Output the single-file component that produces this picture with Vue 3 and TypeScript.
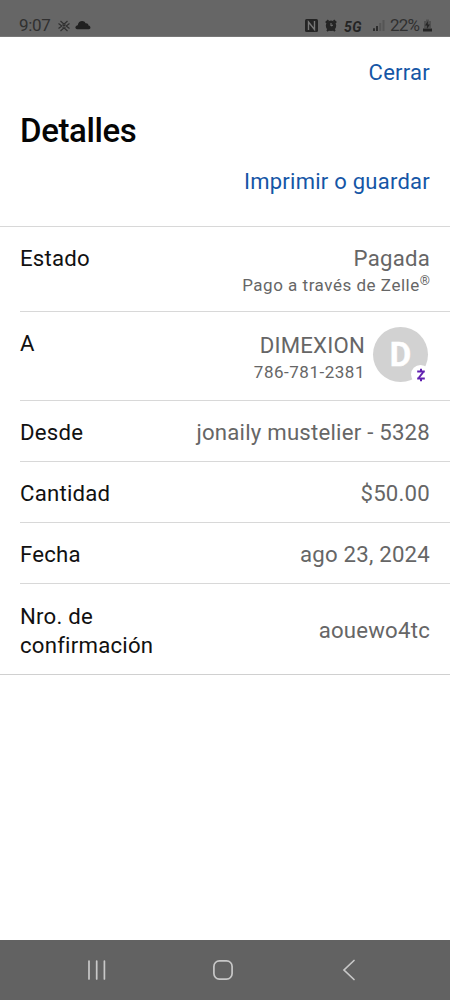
<script setup lang="ts">
interface Row {
  key: string
  label: string
  value: string
  sub?: string
  mark?: string
  contact?: boolean
}

const rows: Row[] = [
  { key: 'status', label: 'Estado', value: 'Pagada', sub: 'Pago a través de Zelle', mark: '®' },
  { key: 'to', label: 'A', value: 'DIMEXION', sub: '786-781-2381', contact: true },
  { key: 'from', label: 'Desde', value: 'jonaily mustelier - 5328' },
  { key: 'amount', label: 'Cantidad', value: '$50.00' },
  { key: 'date', label: 'Fecha', value: 'ago 23, 2024' },
  { key: 'confirmation', label: 'Nro. de confirmación', value: 'aouewo4tc' },
]
</script>

<template>
  <div class="screen">
    <header class="status-bar">
      <span class="clock">9:07</span>
      <svg class="fan" viewBox="0 0 12 12" width="12" height="12">
        <path d="M.5 3.500 3.800 6 .5 8.500M11.500 3.500 8.200 6l3.300 2.500M2.500 1 6 4.300 9.500 1M2.500 11 6 7.700 9.500 11" />
        <path d="M4.500 4.500l3 3M7.500 4.500l-3 3" />
      </svg>
      <svg class="cloud" viewBox="0 0 16 10" width="16" height="10">
        <path d="M2.200 9.200C-.6 9.200 0 5.500 2.800 5.200 3 .2 9.500-.4 10.500 3.200 13 3 13.400 4.500 13.500 5.400 16.300 6 15.800 9.200 13.800 9.200Z" />
      </svg>
      <div class="indicators">
        <svg class="nfc" viewBox="0 0 13 13" width="13" height="13">
          <rect width="13" height="13" rx="1.500" />
          <path d="M3.500 11V3L9.500 10.500V2" />
        </svg>
        <svg class="alarm" viewBox="0 0 12 13" width="12" height="13">
          <path class="ears" d="M.8 3.800 3.500 1.300M11.200 3.800 8.500 1.300M2 12l1.700-1.700M10 12l-1.700-1.700" />
          <circle cx="6" cy="6.800" r="5.200" />
          <path class="hands" d="M6 4v3l2-1" />
        </svg>
        <span class="network">5G</span>
        <svg class="signal" viewBox="0 0 12 12" width="12" height="12">
          <path class="on" d="M1 12V9.200M4 12V7" />
          <path class="off" d="M7.200 12V4M10.500 12V1" />
        </svg>
        <span class="percent">22%</span>
        <svg class="battery" viewBox="0 0 9 13" width="9" height="13">
          <path class="shell" d="M3 .5h3V2h2v7H1V2h2Z" />
          <path class="charge" d="M5 2 2 6.500h2.200L3.700 10 7 5.500H4.700ZM0 9.500h9v3H0Z" />
        </svg>
      </div>
    </header>

    <main class="sheet">
      <div class="action close"><a>Cerrar</a></div>
      <h1>Detalles</h1>
      <div class="action print"><a>Imprimir o guardar</a></div>

      <dl class="details">
        <div v-for="row in rows" :key="row.key" class="row" :class="row.key">
          <dt>{{ row.label }}</dt>
          <dd>
            <div class="text">
              <span class="value">{{ row.value }}</span>
              <span v-if="row.sub" class="sub">{{ row.sub }}<sup v-if="row.mark">{{ row.mark }}</sup></span>
            </div>
            <div v-if="row.contact" class="avatar">
              <span>D</span>
              <div class="badge">
                <svg viewBox="0 0 10 14" width="10" height="14">
                  <path d="M1.200 3.600H8.800M1.200 10.400H8.800M5 .8V3.800M5 10.200V13.200" />
                  <path d="M7.300 4 2.700 10" />
                </svg>
              </div>
            </div>
          </dd>
        </div>
      </dl>
    </main>

    <nav class="nav-bar">
      <svg viewBox="0 0 20 22" width="20" height="22"><path d="M2 2V20M9.700 2V20M17.400 2V20" /></svg>
      <svg viewBox="0 0 22 22" width="22" height="22"><rect x="1.900" y="1.900" width="18.200" height="18.200" rx="5.500" /></svg>
      <svg viewBox="0 0 14 22" width="14" height="22"><path d="M12 1.500 2 11l10 9.500" /></svg>
    </nav>
  </div>
</template>

<style>
body {
  background: #fff;
}
</style>

<style scoped>
.screen {
  display: flex;
  flex-direction: column;
  width: 450px;
  height: 1000px;
  overflow: hidden;
  background: #fff;
  color: #111;
  font-family: Roboto, "Liberation Sans", sans-serif;
}

.status-bar {
  display: flex;
  flex: none;
  box-sizing: border-box;
  height: 37px;
  padding: 15px 18px 0 19px;
  background: #666;
  border-bottom: 1px solid #777;
  color: #303030;
}

.status-bar svg {
  flex: none;
}

.clock,
.percent {
  font-size: 17px;
  line-height: 21px;
}

.clock {
  width: 39px;
  letter-spacing: -0.3px;
}

.fan {
  margin-top: 5px;
  fill: none;
  stroke: #303030;
  stroke-width: 1.2;
}

.cloud {
  margin: 5px 0 0 5px;
  fill: #202020;
}

.indicators {
  display: flex;
  margin-left: auto;
}

.nfc {
  margin-top: 4px;
  fill: #242424;
}

.nfc path {
  fill: none;
  stroke: #777;
  stroke-width: 1.4;
}

.alarm {
  margin: 4px 0 0 7px;
  fill: #242424;
}

.ears {
  fill: none;
  stroke: #242424;
  stroke-width: 2;
}

.hands {
  fill: none;
  stroke: #777;
  stroke-width: 1;
}

.network {
  width: 19px;
  margin: 1px 0 0 7px;
  font-size: 14px;
  font-style: italic;
  font-weight: 700;
  line-height: 23px;
  letter-spacing: 0.4px;
  color: #242424;
}

.signal {
  margin: 4px 0 0 10px;
  fill: none;
  stroke-width: 2;
}

.on {
  stroke: #2c2c2c;
}

.off {
  stroke: #555;
}

.percent {
  width: 31px;
  margin-left: 5px;
  letter-spacing: -0.8px;
}

.battery {
  margin: 4px 0 0 2px;
}

.shell {
  fill: #505050;
}

.charge {
  fill: #242424;
}

.sheet {
  flex: 1;
  min-height: 0;
}

.action {
  padding-right: 20px;
  font-size: 22px;
  line-height: 30px;
  letter-spacing: 0.25px;
  text-align: right;
  color: #1556a6;
}

.close {
  padding-top: 21px;
}

h1 {
  margin: 22px 0 0 20px;
  font-size: 33px;
  font-weight: 500;
  line-height: 42px;
  letter-spacing: -0.4px;
  color: #050505;
}

.print {
  padding-top: 15px;
}

.details {
  margin: 29px 0 0;
  border-top: 1px solid #d8d8d8;
  border-bottom: 1px solid #d0d0d0;
}

.row {
  display: flex;
  box-sizing: border-box;
  justify-content: space-between;
  height: 61px;
  margin-left: 20px;
  padding: 17px 20px 0 0;
  border-bottom: 1px solid #d8d8d8;
  font-size: 22.200px;
  line-height: 29px;
  letter-spacing: 0.22px;
}

.status {
  height: 85px;
}

.to {
  height: 89px;
}

.confirmation {
  height: 90px;
  padding-top: 18px;
  border-bottom: 0;
}

dt {
  width: 150px;
  flex: none;
}

dd {
  display: flex;
  margin: 0;
  color: #666;
  white-space: nowrap;
}

.text {
  display: flex;
  flex-direction: column;
  align-items: flex-end;
}

.sub {
  font-size: 17px;
  line-height: 25px;
  letter-spacing: 0.52px;
}

sup {
  font-size: 13px;
  line-height: 0;
  vertical-align: 6px;
  letter-spacing: 0;
}

.to .text {
  padding-top: 2px;
}

.confirmation dd {
  padding-top: 14px;
}

.avatar {
  position: relative;
  width: 55px;
  height: 55px;
  margin: -2px 2px 0 8px;
  border-radius: 50%;
  background: #d2d2d2;
  color: #fff;
  font-size: 33px;
  font-weight: 700;
  line-height: 56px;
  text-align: center;
}

.avatar > span {
  -webkit-text-stroke: 0.5px #fff;
}

.badge {
  position: absolute;
  right: -2px;
  bottom: -2px;
  display: flex;
  align-items: center;
  justify-content: center;
  width: 19px;
  height: 19px;
  border-radius: 50%;
  background: #fff;
}

.badge path {
  fill: none;
  stroke: #6020b0;
  stroke-width: 2;
}

.nav-bar {
  display: flex;
  flex: none;
  align-items: center;
  box-sizing: border-box;
  height: 60px;
  padding-left: 87px;
  gap: 104.500px;
  background: #626262;
}

.nav-bar svg:last-child {
  margin-left: 4px;
}

.nav-bar svg {
  fill: none;
  stroke: #c8c8c8;
  stroke-width: 1.7;
  stroke-linecap: round;
}
</style>
